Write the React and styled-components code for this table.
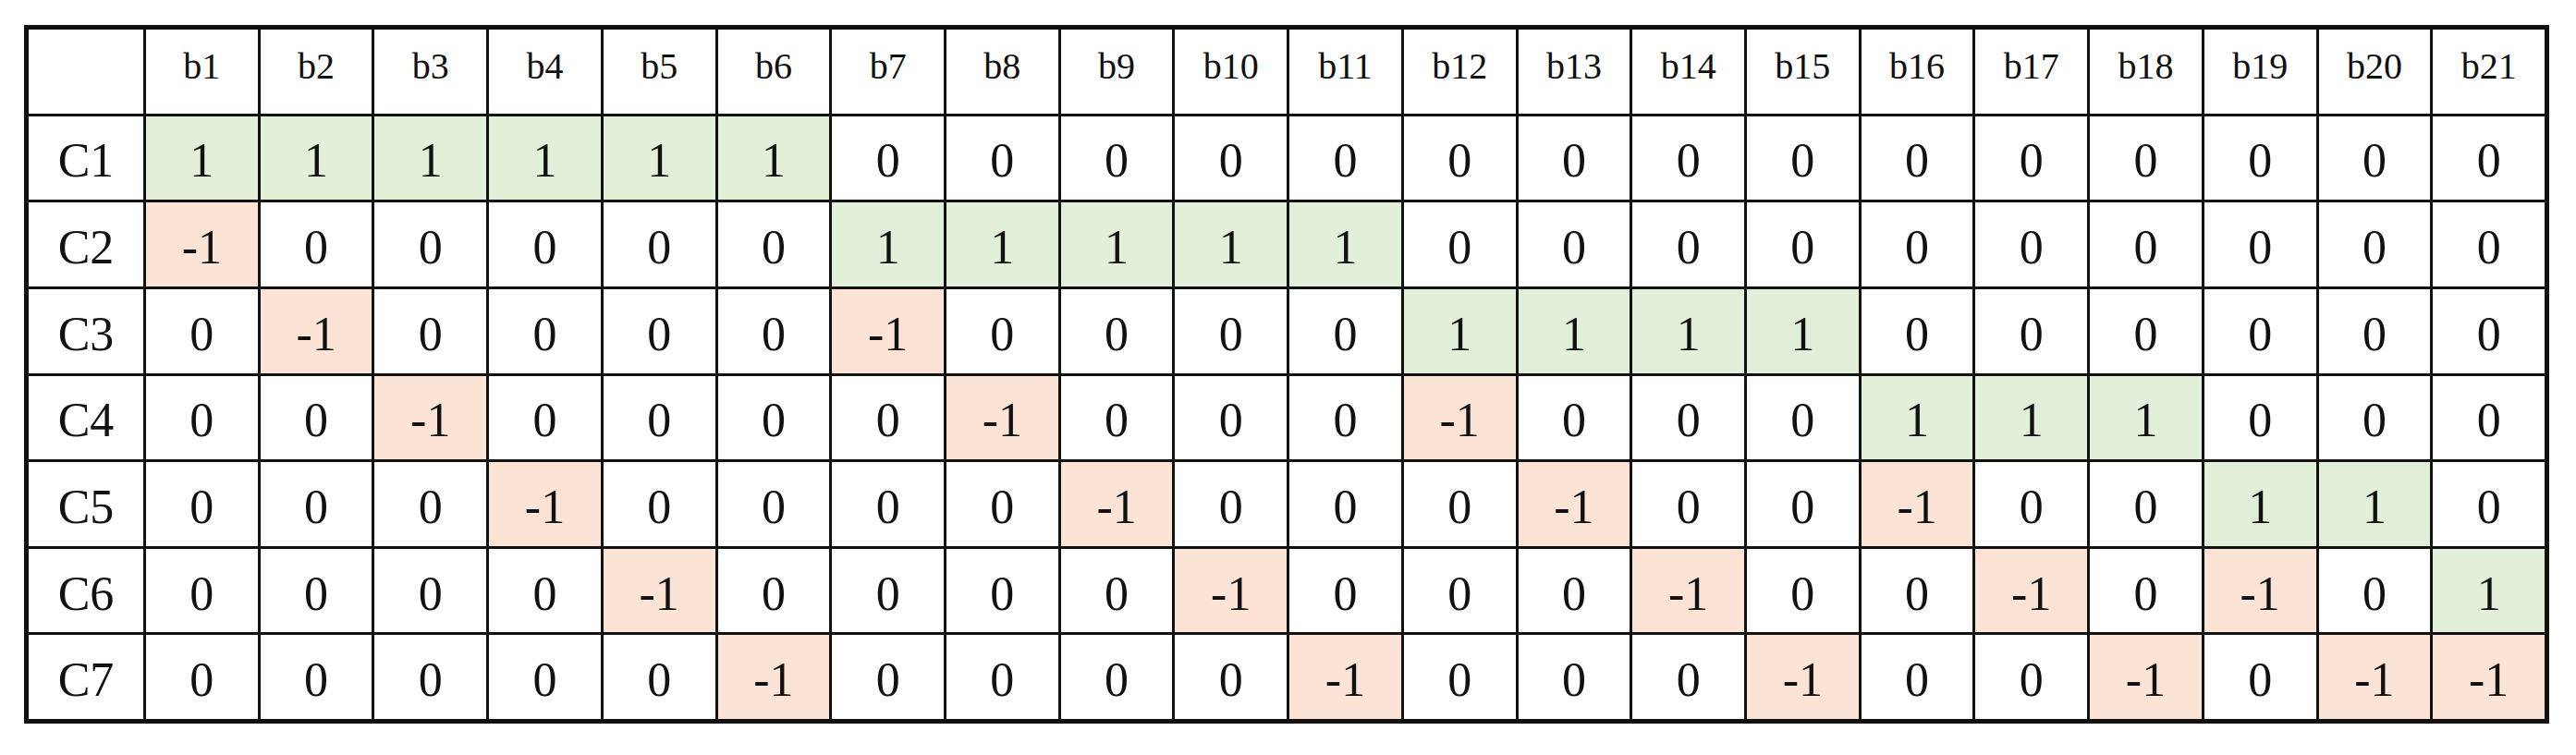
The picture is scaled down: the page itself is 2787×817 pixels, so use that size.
import React from "react";
import styled, { createGlobalStyle } from "styled-components";

const NODES = 7;

// every branch runs from a lower node to a higher one: C1→C2, C1→C3 ... C6→C7
const branches = [];
for (let from = 0; from < NODES; from++) {
  for (let to = from + 1; to < NODES; to++) {
    branches.push({ from, to });
  }
}

const rows = Array.from({ length: NODES }, (_, node) =>
  branches.map((b) => (b.from === node ? 1 : b.to === node ? -1 : 0))
);

const GlobalStyle = createGlobalStyle`
  html, body {
    margin: 0;
    padding: 0;
    background: #ffffff;
  }
`;

const Page = styled.div`
  width: 2787px;
  height: 817px;
  padding: 27px 0 0 26px;
  box-sizing: border-box;
  background: #ffffff;
`;

const Grid = styled.div`
  width: 2732px;
  height: 756px;
  box-sizing: border-box;
  display: grid;
  grid-template-columns: 124px repeat(${branches.length}, 1fr);
  grid-auto-rows: 1fr;
  gap: 3px;
  padding: 5px;
  background: #111111;
`;

const toneColors = {
  plus: "#e2efd9",
  minus: "#fbe4d5",
  plain: "#ffffff",
};

const Cell = styled.div`
  display: flex;
  align-items: center;
  justify-content: center;
  background: ${({ $tone }) => toneColors[$tone]};
  font-family: "Liberation Serif", "Times New Roman", serif;
  font-size: 52px;
  color: #111111;
  padding-top: 6px;
  box-sizing: border-box;
`;

const HeadCell = styled(Cell)`
  font-size: 40px;
  padding-top: 0;
  padding-bottom: 12px;
`;

const toneOf = (v) => (v === 1 ? "plus" : v === -1 ? "minus" : "plain");

const App = () => {
  return (
    <>
      <GlobalStyle />
      <Page>
        <Grid>
          <HeadCell $tone="plain" />
          {branches.map((_, i) => (
            <HeadCell key={i} $tone="plain">
              b{i + 1}
            </HeadCell>
          ))}
          {rows.map((values, r) => (
            <React.Fragment key={r}>
              <Cell $tone="plain">C{r + 1}</Cell>
              {values.map((v, c) => (
                <Cell key={c} $tone={toneOf(v)}>
                  {v}
                </Cell>
              ))}
            </React.Fragment>
          ))}
        </Grid>
      </Page>
    </>
  );
};

export default App;
